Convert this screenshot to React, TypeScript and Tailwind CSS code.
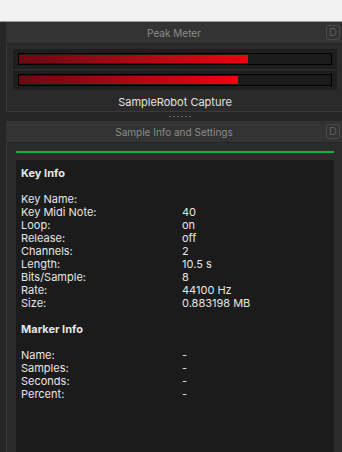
const keyInfo: [string, string][] = [
  ["Key Name:", ""],
  ["Key Midi Note:", "40"],
  ["Loop:", "on"],
  ["Release:", "off"],
  ["Channels:", "2"],
  ["Length:", "10.5 s"],
  ["Bits/Sample:", "8"],
  ["Rate:", "44100 Hz"],
  ["Size:", "0.883198 MB"],
];

const markerInfo: [string, string][] = [
  ["Name:", "-"],
  ["Samples:", "-"],
  ["Seconds:", "-"],
  ["Percent:", "-"],
];

function PanelHeader({ title }: { title: string }) {
  return (
    <div className="relative h-[22px] flex items-center justify-center pt-px bg-[#333333] border-b border-[#262626] text-[10px] text-[#8c8c8c]">
      {title}
      <div className="absolute right-[2px] top-[3px] w-[14px] h-[15px] rounded-[3px] border border-[#4a4a4a] flex items-center justify-center text-[11px] text-[#5a5a5a]">
        D
      </div>
    </div>
  );
}

function MeterBar({ pct }: { pct: number }) {
  return (
    <div className="h-[20px] bg-[#1e1e1e] flex items-center px-[5px]">
      <div className="w-full h-[12px] border border-black bg-[#1b1b1b] py-px">
        <div
          className="h-full bg-gradient-to-r from-[#6c0812] to-[#f2000f]"
          style={{ width: `${pct}%` }}
        />
      </div>
    </div>
  );
}

function InfoRows({ rows }: { rows: [string, string][] }) {
  return (
    <div>
      {rows.map(([k, v]) => (
        <div key={k} className="flex h-[13px] leading-[13px]">
          <div className="w-[161px]">{k}</div>
          <div>{v}</div>
        </div>
      ))}
    </div>
  );
}

export default function App() {
  return (
    <div
      className="w-[342px] h-[452px] overflow-hidden bg-[#262626] flex flex-col"
      style={{ fontFamily: "Inter, 'Noto Sans', sans-serif" }}
    >
      <div className="h-[22px] bg-[#f2f2f2] border-b border-[#9a9a9a] shrink-0" />
      <div className="flex-1 flex">
        <div className="w-[6px] bg-[#262626]" />
        <div className="flex-1 flex flex-col">
          {/* Peak meter */}
          <PanelHeader title="Peak Meter" />
          <div className="h-[68px] border-l border-b border-[#3a3a3a] bg-[#2a2a2a] pl-[6px] pr-[5px] pt-[5px] flex flex-col gap-[2px]">
            <MeterBar pct={73.5} />
            <MeterBar pct={70.3} />
            <div className="text-center text-[11px] leading-[18px] text-[#e2e2e2] mt-px">SampleRobot Capture</div>
          </div>
          <div className="h-[9px] flex justify-center items-center gap-[2px] pl-[12px]">
            {[0, 1, 2, 3, 4, 5].map((i) => (
              <div key={i} className="w-[2px] h-[1px] bg-[#6a6a6a]" />
            ))}
          </div>

          {/* Sample info */}
          <PanelHeader title="Sample Info and Settings" />
          <div className="flex-1 flex flex-col border-l border-[#3a3a3a] bg-[#2b2b2b] pl-[9px]">
            <div className="flex flex-1">
              <div className="flex-1 flex flex-col">
                <div className="h-[2px] mt-[8px] bg-[#12b146]" />
                <div className="flex-1 mt-[7px] bg-[#1b1b1b] pl-[5px] pt-[7px] text-[11px] text-[#e6e6e6]">
                  <div className="font-bold h-[13px] leading-[13px]">Key Info</div>
                  <div className="h-[13px]" />
                  <InfoRows rows={keyInfo} />
                  <div className="h-[13px]" />
                  <div className="font-bold h-[13px] leading-[13px]">Marker Info</div>
                  <div className="h-[13px]" />
                  <InfoRows rows={markerInfo} />
                </div>
              </div>
              <div className="w-[8px] bg-[#2c2c2c]" />
            </div>
          </div>
        </div>
      </div>
    </div>
  );
}
